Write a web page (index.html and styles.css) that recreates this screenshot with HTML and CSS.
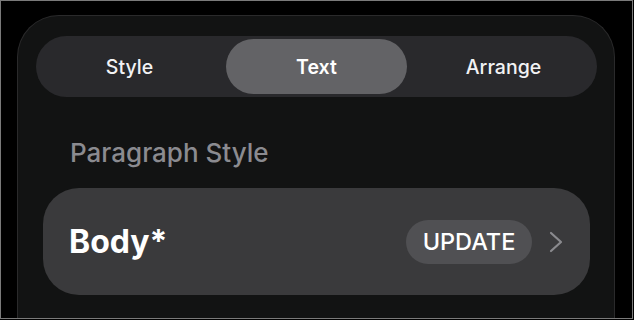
FILE: index.html
```html
<!DOCTYPE html>
<html>
<head>
<meta charset="utf-8">
<link rel="stylesheet" href="styles.css">
</head>
<body>
<div class="frame">
  <div class="panel">
    <div class="segmented">
      <div class="seg">Style</div>
      <div class="seg seg-active">Text</div>
      <div class="seg">Arrange</div>
    </div>
    <div class="section-title">Paragraph Style</div>
    <div class="style-row">
      <div class="style-name">Body*</div>
      <div class="style-actions">
        <div class="update-btn">UPDATE</div>
        <svg class="chevron" width="14" height="22" viewBox="0 0 14 22"><path d="M2 2 L12 11 L2 20" fill="none" stroke="#8a8a8e" stroke-width="2.2" stroke-linecap="round" stroke-linejoin="round"/></svg>
      </div>
    </div>
  </div>
</div>
</body>
</html>
```
FILE: styles.css
```css
html, body {
  margin: 0;
  padding: 0;
  background: #000;
}
body {
  font-family: Inter, "Noto Sans", "Liberation Sans", sans-serif;
}
.frame {
  box-sizing: border-box;
  width: 633px;
  height: 319px;
  border: 1px solid #7a7a7a;
  background: #000;
  padding: 14px 0 0 16px;
  overflow: hidden;
}
.panel {
  box-sizing: border-box;
  width: 598px;
  height: 304px;
  background: #121313;
  border: 1px solid #2a2a2b;
  border-bottom: none;
  border-radius: 42px 42px 0 0;
  padding: 20px 17px 0 18px;
}
.segmented {
  box-sizing: border-box;
  height: 61px;
  border-radius: 31px;
  background: #29292c;
  padding: 3px;
  display: flex;
  gap: 6px;
}
.seg {
  flex: 1;
  display: flex;
  align-items: center;
  justify-content: center;
  color: #f2f2f4;
  font-size: 19.5px;
  font-weight: 500;
  border-radius: 28px;
}
.seg-active {
  background: #636366;
  color: #fff;
  font-weight: 600;
}
.section-title {
  margin: 41px 0 0 34px;
  font-size: 26px;
  line-height: 30px;
  font-weight: 500;
  color: #8b8b90;
}
.style-row {
  box-sizing: border-box;
  margin: 20px 7px 0 7px;
  height: 107px;
  border-radius: 36px;
  background: #3a3a3c;
  display: flex;
  align-items: center;
  justify-content: space-between;
  padding: 0 27px 0 26px;
}
.style-name {
  color: #fff;
  font-size: 32px;
  font-weight: 700;
}
.style-actions {
  display: flex;
  align-items: center;
  gap: 17px;
}
.update-btn {
  box-sizing: border-box;
  height: 44px;
  width: 126px;
  border-radius: 22px;
  background: #505053;
  color: #fff;
  font-size: 23.5px;
  font-weight: 500;
  display: flex;
  align-items: center;
  justify-content: center;
}
.chevron {
  display: block;
}
```
